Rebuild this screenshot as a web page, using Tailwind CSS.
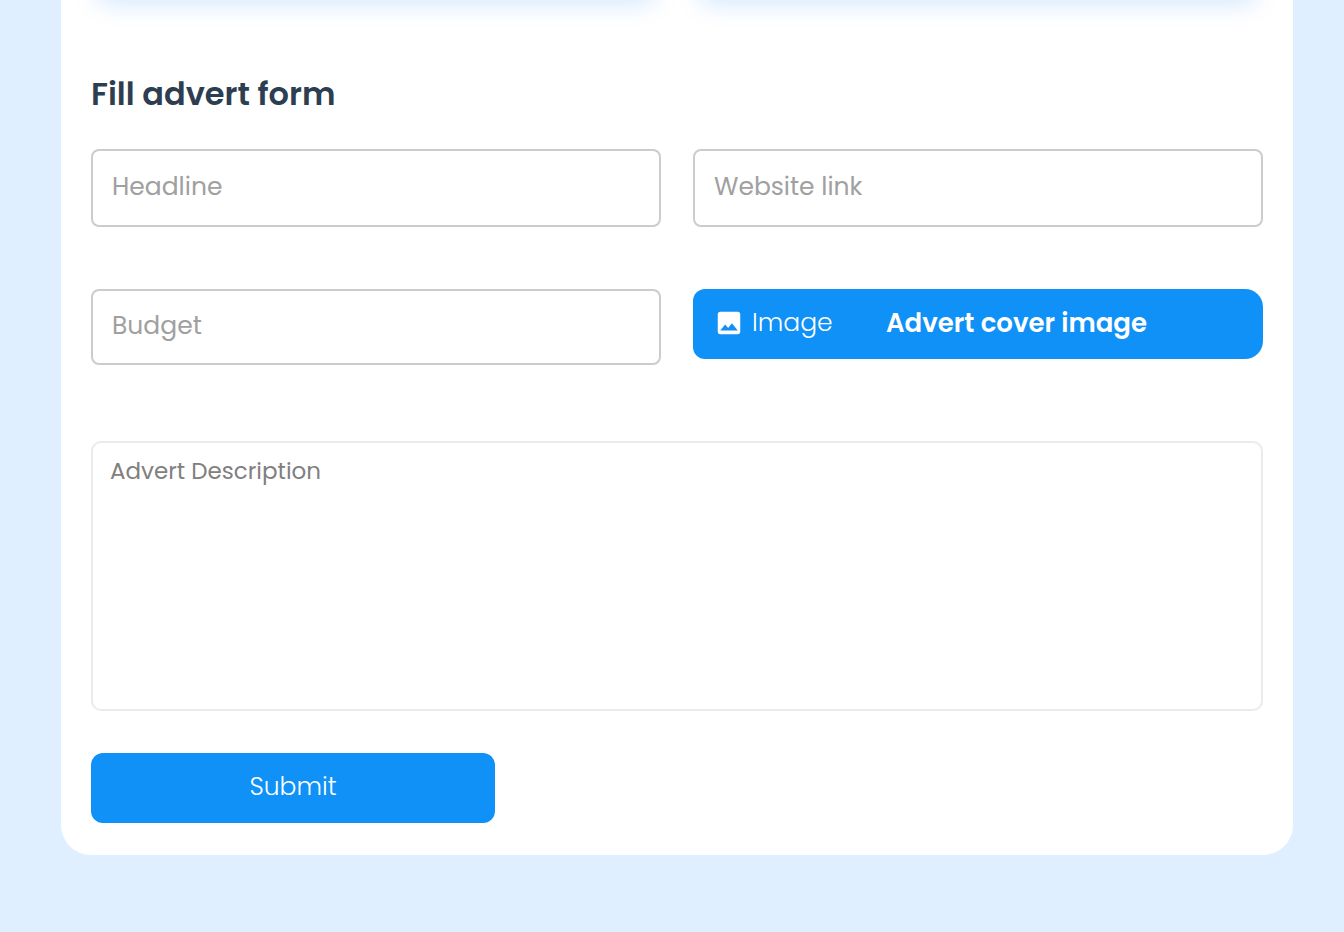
<!DOCTYPE html>
<html lang="en">
<head>
    <meta charset="UTF-8">
    <meta name="viewport" content="width=device-width, initial-scale=1.0">
    <title>Create Advert</title>
    <script src="https://cdn.jsdelivr.net/npm/@tailwindcss/browser@4"></script>
</head>
<body class="min-h-screen bg-[#dfefff] font-[Poppins,Inter,sans-serif] overflow-x-hidden">
    <main class="-mt-24 ml-[61px] mr-[51px] mb-[77px] px-[30px] pb-8 bg-white rounded-b-[30px]">
        <!-- Advert type cards -->
        <section class="grid grid-cols-2 gap-8">
            <div class="h-[90px] bg-white rounded-xl shadow-[0_16px_26px_-8px_rgba(0,120,240,0.2)]"></div>
            <div class="h-[90px] bg-white rounded-xl shadow-[0_16px_26px_-8px_rgba(0,120,240,0.2)]"></div>
        </section>

        <!-- Advert form -->
        <form class="pt-20">
            <h2 class="text-[32px] leading-10 font-semibold text-[#2c3e50]">Fill advert form</h2>

            <div class="grid grid-cols-2 items-start gap-x-8 gap-y-[62px] mt-[35px]">
                <input type="text" name="headline" aria-label="Headline" placeholder="Headline" class="w-full h-[78px] px-[19px] pb-[2px] rounded-lg border-2 border-[#cccccc] text-[25px] placeholder:text-[#a0a0a0]">
                <input type="text" name="website" aria-label="Website link" placeholder="Website link" class="w-full h-[78px] px-[19px] pb-[2px] rounded-lg border-2 border-[#cccccc] text-[25px] placeholder:text-[#a0a0a0]">
                <input type="text" name="budget" aria-label="Budget" placeholder="Budget" class="w-full h-[76px] px-[19px] pb-[2px] rounded-lg border-2 border-[#cccccc] text-[25px] placeholder:text-[#a0a0a0]">
                <div class="flex items-center gap-7 h-[70px] rounded-l-xl rounded-r-[18px] bg-[#0f91f7] text-white">
                    <button type="button" class="flex items-center gap-2 w-[165px] h-full pl-[21px] pb-[2px] text-[25px] font-light">
                        <svg class="size-[30px]" viewBox="0 0 24 24" fill="currentColor">
                            <path d="M21 19V5c0-1.100-.9-2-2-2H5c-1.100 0-2 .9-2 2v14c0 1.100.9 2 2 2h14c1.100 0 2-.9 2-2zM8.900 13.200l2.400 2.700L14.300 12.100l4.700 5.900H5l3.900-4.800z"/>
                        </svg>
                        Image
                    </button>
                    <span class="pb-[2px] text-[26px] font-semibold">Advert cover image</span>
                </div>
            </div>

            <textarea name="description" aria-label="Advert Description" placeholder="Advert Description" class="block w-full h-[270px] mt-[76px] px-[17px] py-3 rounded-[10px] border-2 border-[#ebebeb] text-[23px] leading-8 placeholder:text-[#808080] resize-none"></textarea>

            <button type="submit" class="block w-[404px] h-[70px] mt-[42px] pb-[2px] rounded-xl bg-[#0f91f7] text-[25px] font-light text-white">Submit</button>
        </form>
    </main>
</body>
</html>
